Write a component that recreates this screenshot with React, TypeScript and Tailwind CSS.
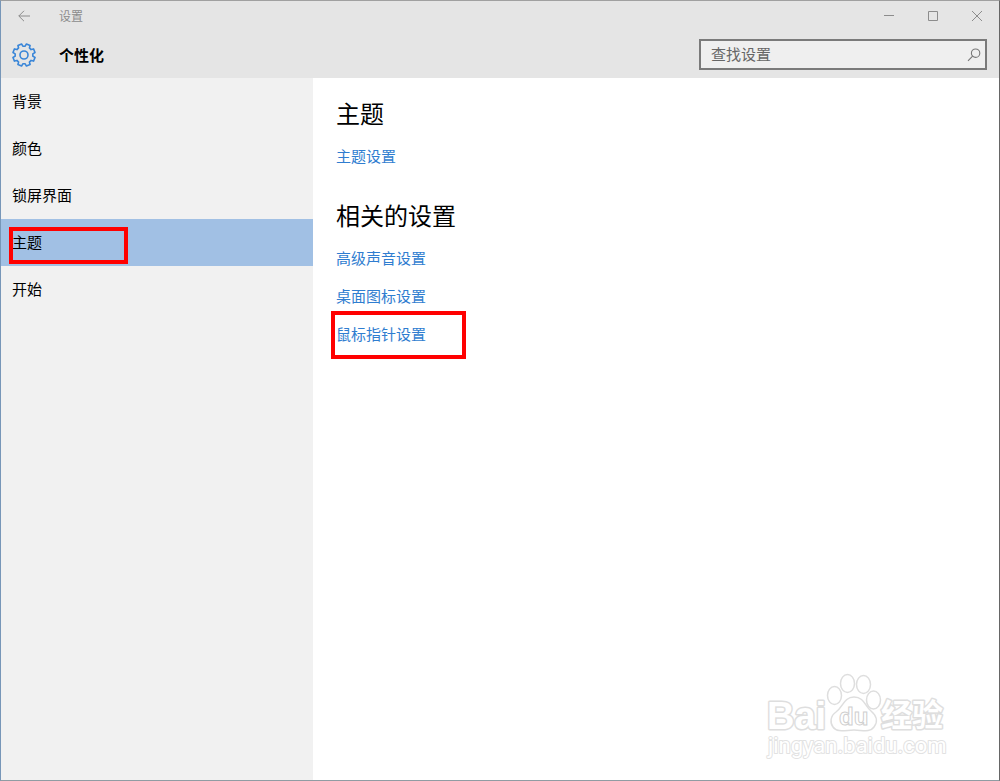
import React from 'react';

const navItems = [
    { id: 'background', label: '背景' },
    { id: 'colors', label: '颜色' },
    { id: 'lockscreen', label: '锁屏界面' },
    { id: 'themes', label: '主题', marked: true },
    { id: 'start', label: '开始' },
];

const relatedLinks = [
    { id: 'sound', label: '高级声音设置' },
    { id: 'desktop-icons', label: '桌面图标设置' },
    { id: 'mouse-pointer', label: '鼠标指针设置', marked: true },
];

// Eight teeth, with a gap (not a tooth) pointing straight up
const gearPath = () => {
    const points: string[] = [];
    for (let i = 0; i < 8; i++) {
        const center = i * 45 + 22.5;
        [[-15, 8.9], [-10, 11.3], [10, 11.3], [15, 8.9]].forEach(([offset, r]) => {
            const a = ((center + offset - 90) * Math.PI) / 180;
            points.push(`${(12 + r * Math.cos(a)).toFixed(2)} ${(12 + r * Math.sin(a)).toFixed(2)}`);
        });
    }
    return `M${points.join('L')}Z`;
};

const GearIcon = () => (
    <svg width="24" height="24" viewBox="0 0 24 24" fill="none" stroke="#3a86d8" strokeWidth="1.6" strokeLinejoin="round" aria-hidden="true">
        <path d={gearPath()} />
        <circle cx="12" cy="12" r="4" />
    </svg>
);

const BackIcon = () => (
    <svg width="12" height="12" viewBox="0 0 12 12" fill="none" stroke="#8c8c8c" aria-hidden="true">
        <path d="M12 6H.8M6 .8L.8 6L6 11.2" />
    </svg>
);

const SearchIcon = () => (
    <svg width="14" height="14" viewBox="0 0 14 14" fill="none" stroke="#777" strokeWidth="1.1" aria-hidden="true">
        <circle cx="8.6" cy="5.2" r="4.2" />
        <path d="M5.6 8.2L1 12.8" />
    </svg>
);

const Watermark = () => (
    <svg className="pointer-events-none absolute right-[51px] bottom-[18px]" width="188" height="96" viewBox="0 0 188 96" fill="#fff" stroke="#dedede" strokeWidth="1.5">
        <g strokeWidth="3" paintOrder="stroke" strokeLinejoin="round">
            <text x="7" y="63" fontSize="38" fontWeight="700" fontFamily="'Liberation Sans', sans-serif">Bai</text>
            <text x="121" y="60" fontSize="31" fontWeight="700" fontFamily="'Noto Sans CJK SC', sans-serif">经验</text>
            <text x="8" y="87" fontSize="22" fontWeight="400" stroke="#e2e2e2" strokeWidth="2" fontFamily="Roboto, sans-serif">jingyan.baidu.com</text>
        </g>
        <ellipse cx="74.500" cy="29.500" rx="7" ry="9" />
        <ellipse cx="87.500" cy="17.500" rx="7" ry="9" />
        <ellipse cx="103.500" cy="18.500" rx="7" ry="9" />
        <ellipse cx="113.500" cy="34" rx="7" ry="9" />
        <path d="M94 31C84 31 83 41 76 46C70 50 70 57 73 61C77 67 86 64 94 64C102 64 110 67 114 61C118 56 117 50 111 45C105 40 104 31 94 31Z" />
        <text x="79" y="59" fontSize="24" fontWeight="700" fontFamily="'Liberation Sans', sans-serif" stroke="#cfcfcf" strokeWidth="1">du</text>
    </svg>
);

const App: React.FC = () => {
    return (
        <div
            lang="zh-CN"
            className="relative flex min-h-screen flex-col border border-t-[#a0a0a0] border-r-[#666] border-b-[#909ca3] border-l-[#7796b8] bg-white font-['Noto_Sans_CJK_SC',sans-serif] text-[15px] text-black"
        >
            <header className="bg-[#e5e5e5]">
                <div className="flex h-[30px] items-center">
                    <button type="button" aria-label="返回" className="flex h-full w-[46px] items-center justify-center">
                        <BackIcon />
                    </button>
                    <span className="ml-3 text-xs text-[#8c8c8c]">设置</span>
                    <div className="ml-auto flex h-full">
                        <button type="button" aria-label="最小化" className="flex w-11 items-center justify-center">
                            <svg width="10" height="10" stroke="#8c8c8c" aria-hidden="true"><path d="M0 4.5H10" /></svg>
                        </button>
                        <button type="button" aria-label="最大化" className="flex w-11 items-center justify-center">
                            <svg width="10" height="10" fill="none" stroke="#8c8c8c" aria-hidden="true"><path d="M.5 .5H9.500V9.500H.5Z" /></svg>
                        </button>
                        <button type="button" aria-label="关闭" className="flex w-11 items-center justify-center">
                            <svg width="10" height="10" stroke="#8c8c8c" aria-hidden="true"><path d="M0 0L10 10M10 0L0 10" /></svg>
                        </button>
                    </div>
                </div>
                <div className="flex h-[47px] items-start justify-between pr-3 pl-[11px]">
                    <div className="flex h-12 items-center gap-[23px]">
                        <GearIcon />
                        <h1 className="font-bold">个性化</h1>
                    </div>
                    <label className="mt-2 flex h-[31px] w-72 items-center border-2 border-[#7a7a7a] bg-[#efefef] pr-1 pl-[10px]">
                        <input
                            type="text"
                            aria-label="查找设置"
                            placeholder="查找设置"
                            className="min-w-0 flex-1 bg-transparent outline-none placeholder:text-[#666]"
                        />
                        <SearchIcon />
                    </label>
                </div>
            </header>

            <div className="flex flex-1">
                <nav className="w-78 bg-[#f1f1f1]">
                    <ul>
                        {navItems.map((item) => (
                            <li key={item.id} className={item.marked ? 'relative bg-[#a1c0e4]' : ''}>
                                <a href={`#${item.id}`} className="flex h-[47px] items-center pl-[11px]">{item.label}</a>
                                {item.marked && <span className="pointer-events-none absolute top-2 left-2 h-[37px] w-[119px] border-4 border-[#f00]" />}
                            </li>
                        ))}
                    </ul>
                </nav>

                <main className="flex-1 pt-[19px] pl-[23px]">
                    <section>
                        <h2 className="text-2xl/8">主题</h2>
                        <a href="#theme-settings" className="mt-2 flex h-[38px] w-fit items-center text-[#2f7dd0]">主题设置</a>
                    </section>
                    <section className="mt-6">
                        <h2 className="text-2xl/8">相关的设置</h2>
                        <ul className="mt-2">
                            {relatedLinks.map((link) => (
                                <li key={link.id} className="relative">
                                    <a href={`#${link.id}`} className="flex h-[38px] w-fit items-center text-[#2f7dd0]">{link.label}</a>
                                    {link.marked && <span className="pointer-events-none absolute -top-1 -left-[5px] h-12 w-[135px] border-4 border-[#f00]" />}
                                </li>
                            ))}
                        </ul>
                    </section>
                </main>
            </div>
            <Watermark />
        </div>
    );
};

export default App;
